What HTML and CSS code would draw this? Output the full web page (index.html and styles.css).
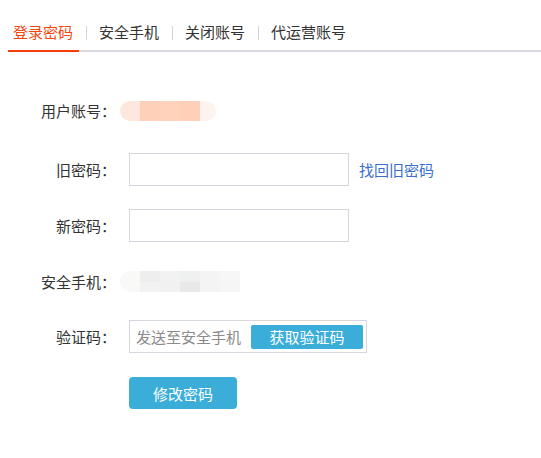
FILE: index.html
```html
<!DOCTYPE html>
<html lang="zh-CN">
<head>
<meta charset="utf-8">
<title>登录密码</title>
<link rel="stylesheet" href="styles.css">
</head>
<body>
<div class="tabs">
  <span class="tab active">登录密码</span>
  <span class="sep"></span>
  <span class="tab">安全手机</span>
  <span class="sep"></span>
  <span class="tab">关闭账号</span>
  <span class="sep"></span>
  <span class="tab">代运营账号</span>
</div>

<div class="form">
  <div class="row row-account">
    <label class="label">用户账号：</label>
    <div class="blur blur-account">
      <span class="seg a1"></span><span class="seg a2"></span><span class="seg a3"></span><span class="seg a4"></span><span class="seg a5"></span>
    </div>
  </div>
  <div class="row row-old">
    <label class="label">旧密码：</label>
    <input class="input" type="password">
    <a class="link">找回旧密码</a>
  </div>
  <div class="row">
    <label class="label">新密码：</label>
    <input class="input" type="password">
  </div>
  <div class="row">
    <label class="label">安全手机：</label>
    <div class="blur blur-phone">
      <span class="cap"></span>
      <span class="col"><i class="c11"></i><i class="c12"></i></span>
      <span class="col"><i class="c21"></i><i class="c22"></i></span>
      <span class="col"><i class="c31"></i><i class="c32"></i></span>
      <span class="col"><i class="c41"></i><i class="c42"></i></span>
      <span class="col"><i class="c51"></i><i class="c52"></i></span>
    </div>
  </div>
  <div class="row row-code">
    <label class="label">验证码：</label>
    <div class="code-box">
      <span class="placeholder">发送至安全手机</span>
      <button class="code-btn" type="button">获取验证码</button>
    </div>
  </div>
  <div class="row row-submit">
    <span class="label"></span>
    <button class="submit" type="button">修改密码</button>
  </div>
</div>
</body>
</html>
```

FILE: styles.css
```css
* { box-sizing: border-box; }

html, body {
  margin: 0;
  padding: 0;
  background: #ffffff;
}

body {
  font-family: "Noto Sans CJK SC", "Noto Sans", sans-serif;
  font-size: 15px;
  color: #333333;
}

.tabs {
  margin-left: 8px;
  display: flex;
  align-items: flex-start;
  border-bottom: 2px solid #d9d9e1;
  height: 52px;
}

.tab {
  display: block;
  padding: 20px 6px 6px 5px;
  line-height: 24px;
  height: 52px;
  margin-bottom: -2px;
  border-bottom: 2px solid transparent;
  color: #333333;
  white-space: nowrap;
}

.tab.active {
  color: #f3460e;
  border-bottom-color: #f53d0b;
}

.sep {
  display: block;
  width: 1px;
  height: 14px;
  margin: 26px 7px 0 7px;
  background: #d4d4d4;
}

.form {
  margin-top: 42px;
}

.row {
  display: flex;
  align-items: center;
  height: 33px;
  margin-top: 23px;
}

.row-account { margin-top: 0; }
.row-old { margin-top: 26px; }
.row-code { margin-top: 22px; }
.row-submit { margin-top: 24px; height: 32px; }

.label {
  width: 116px;
  flex: none;
  text-align: right;
  color: #333333;
  white-space: nowrap;
}

.input {
  margin: 0 0 0 13px;
  width: 220px;
  height: 33px;
  border: 1px solid #d5d6de;
  padding: 0 6px;
  font: inherit;
  outline: none;
}

.link {
  margin-left: 10px;
  color: #3a6fcf;
  text-decoration: none;
  cursor: pointer;
}

.blur {
  margin-left: 4px;
  display: flex;
  overflow: hidden;
}

.blur-account {
  height: 20px;
  width: 96px;
  border-radius: 10px;
}

.seg { display: block; height: 100%; }
.a1 { width: 20px; background: #fee7dd; }
.a2 { width: 20px; background: #ffd0b9; }
.a3 { width: 20px; background: #ffd2bc; }
.a4 { width: 20px; background: #ffcfb7; }
.a5 { width: 16px; background: #fef4ef; }

.blur-phone {
  height: 21px;
  width: 120px;
  border-radius: 10px 0 0 10px;
}

.cap { display: block; width: 20px; height: 100%; background: #f9f9f8; }

.col {
  display: flex;
  flex-direction: column;
  width: 20px;
  height: 100%;
}

.col i { display: block; flex: 1; }
.c11 { background: #eeeeee; } .c12 { background: #f2f2f2; }
.c21 { background: #f2f2f2; } .c22 { background: #f1f1f1; }
.c31 { background: #eff0f0; } .c32 { background: #e8e8e8; }
.c41 { background: #f4f4f4; } .c42 { background: #f4f4f4; }
.c51 { background: #f7f7f7; } .c52 { background: #f6f6f6; }

.code-box {
  margin-left: 13px;
  width: 238px;
  height: 33px;
  border: 1px solid #d5d6de;
  display: flex;
  align-items: center;
  justify-content: space-between;
  padding: 0 3px 0 6px;
}

.placeholder {
  color: #8a8a8a;
  white-space: nowrap;
}

.code-btn {
  width: 112px;
  height: 24px;
  border: none;
  border-radius: 2px;
  background: #3badd9;
  color: #ffffff;
  font: inherit;
  padding: 0;
  line-height: 24px;
}

.submit {
  margin-left: 13px;
  width: 108px;
  height: 32px;
  border: none;
  border-radius: 4px;
  background: #3badd9;
  color: #ffffff;
  font: inherit;
  padding: 0;
}
```
